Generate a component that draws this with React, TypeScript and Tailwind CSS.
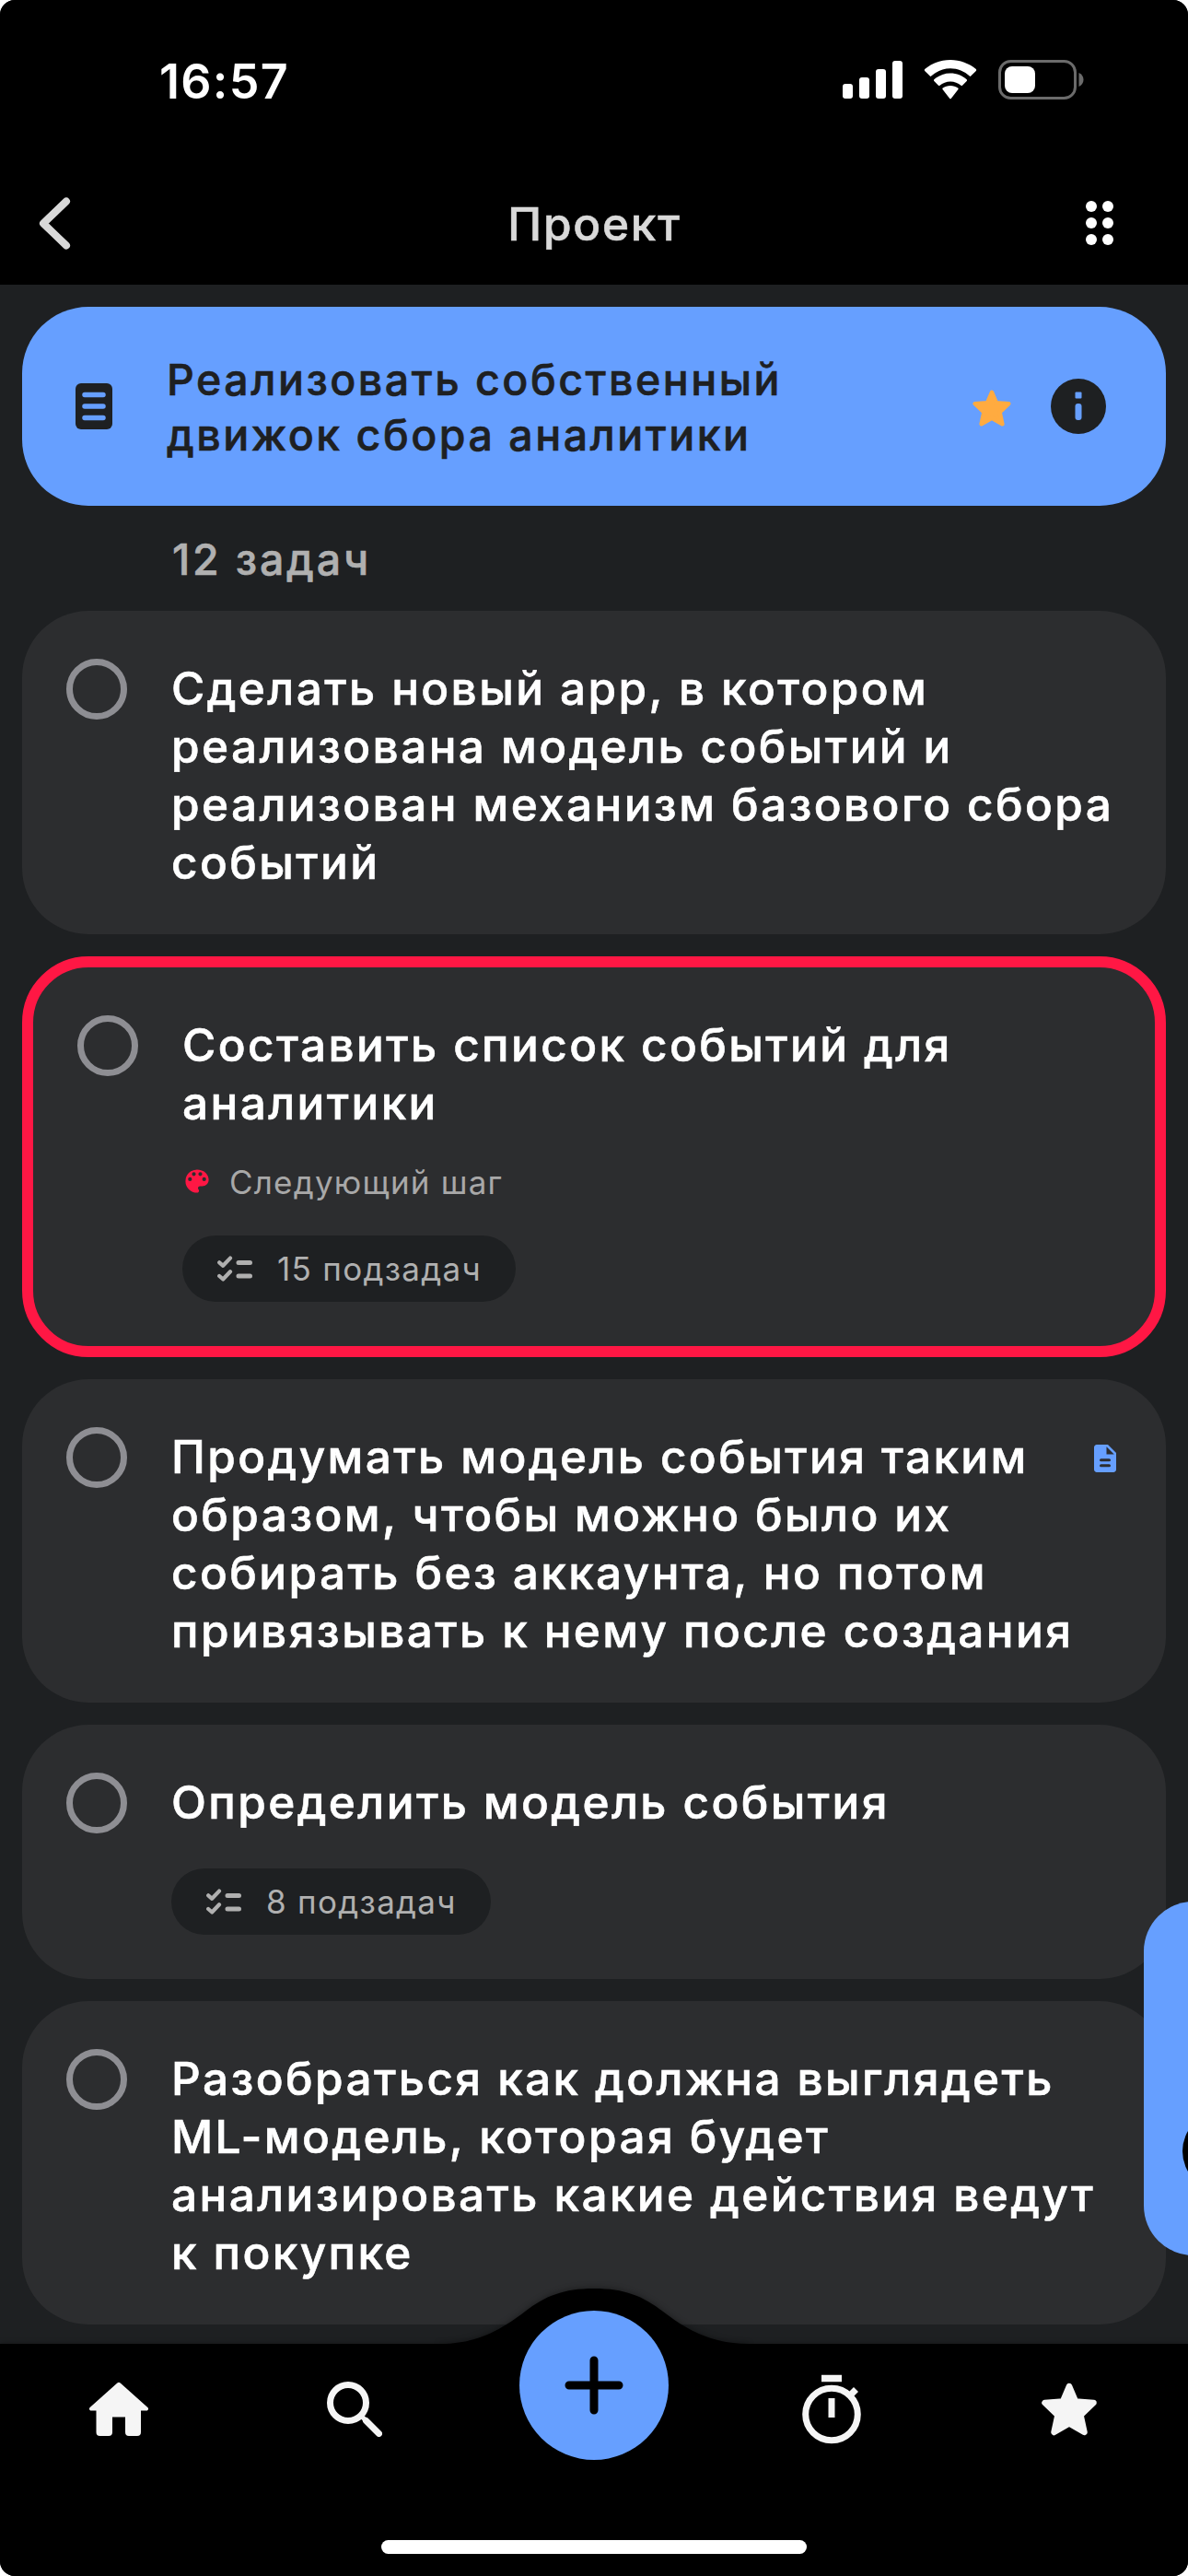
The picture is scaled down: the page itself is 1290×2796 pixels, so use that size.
import type { ReactNode } from "react";

type Task = {
  title: string[];
  highlighted?: boolean;
  label?: string;
  subtasks?: string;
  hasNote?: boolean;
};

const TASKS: Task[] = [
  { title: ["Сделать новый app, в котором", "реализована модель событий и", "реализован механизм базового сбора", "событий"] },
  { title: ["Составить список событий для", "аналитики"], highlighted: true, label: "Следующий шаг", subtasks: "15 подзадач" },
  { title: ["Продумать модель события таким", "образом, чтобы можно было их", "собирать без аккаунта, но потом", "привязывать к нему после создания"], hasNote: true },
  { title: ["Определить модель события"], subtasks: "8 подзадач" },
  { title: ["Разобраться как должна выглядеть", "ML-модель, которая будет", "анализировать какие действия ведут", "к покупке"] },
];

function StatusBar() {
  return (
    <div className="flex h-[174px] items-start justify-between pl-[173px] pr-[112px]">
      <div className="pt-[57px] text-[52px] leading-[63px] font-semibold tracking-[1.3px] text-white">16:57</div>
      <div className="flex items-center gap-[23px] pt-[65px]">
        <svg width="65" height="43" viewBox="0 0 65 43" fill="#fff">
          <rect x="0" y="26" width="11" height="16" rx="3" />
          <rect x="18" y="19" width="11" height="23" rx="3" />
          <rect x="36" y="10" width="11" height="32" rx="3" />
          <rect x="54" y="1" width="11" height="41" rx="3" />
        </svg>
        <svg width="58" height="43" viewBox="0 0 58 43" fill="#fff">
          <path d="M29 9.3c8 0 15.300 3.100 20.800 8.300.4.400 1 .4 1.400 0l5.600-5.700c.5-.5.5-1.300 0-1.800C49.400 3.800 39.500 0 29 0S8.600 3.800 1.200 10.100c-.5.5-.5 1.300 0 1.800l5.600 5.700c.4.400 1 .4 1.400 0C13.700 12.400 21 9.300 29 9.300z" />
          <path d="M29 23.500c4.400 0 8.400 1.600 11.500 4.300.4.400 1.100.4 1.500 0l4.700-4.800c.5-.5.5-1.300 0-1.800C42 17 35.800 14.400 29 14.400S16 17 11.300 21.200c-.5.500-.5 1.300 0 1.800l4.700 4.800c.4.400 1.100.4 1.500 0 3.100-2.700 7.100-4.300 11.500-4.300z" />
          <path d="M37.300 32.300c.5-.5.5-1.300-.1-1.700C35 28.900 32.100 27.900 29 27.900s-6 1-8.200 2.700c-.6.4-.6 1.200-.1 1.700l7.400 9.500c.5.700 1.300.7 1.800 0z" />
        </svg>
        <svg width="94" height="43" viewBox="0 0 94 43">
          <rect x="1.500" y="1.500" width="82" height="40" rx="12" fill="none" stroke="#6b6b6b" strokeWidth="3" />
          <rect x="7" y="7" width="33" height="29" rx="8" fill="#fff" />
          <path d="M87.500 14v15c3-1.200 5-4 5-7.500s-2-6.300-5-7.500z" fill="#6b6b6b" />
        </svg>
      </div>
    </div>
  );
}

function TopBar() {
  return (
    <div className="grid h-[135px] grid-cols-[1fr_auto_1fr] items-center pr-[81px] pl-[42px]">
      <svg width="46" height="60" viewBox="0 0 46 60" fill="none" stroke="#d9d9d9" strokeWidth="8" strokeLinecap="round" strokeLinejoin="round">
        <path d="M30 6.500 5 30.500 30 54.500" />
      </svg>
      <h1 className="ml-[40px] pt-[3px] text-[49.5px] leading-[60px] font-medium tracking-[1.8px] text-[#d9d9d9] [-webkit-text-stroke:0.6px_currentColor]">Проект</h1>
      <div className="grid grid-cols-[12px_12px] justify-end gap-[6px]">
        {[0, 1, 2, 3, 4, 5].map((i) => (
          <span key={i} className="h-3 w-3 rounded-full bg-white" />
        ))}
      </div>
    </div>
  );
}

const STAR = "M30 4 37 20.500 56.500 22 42.500 35.500 46.500 54 30 44.500 13.500 54 17.500 35.500 3.500 22 23 20.500z";

function StarIcon({ className }: { className: string }) {
  return (
    <svg viewBox="0 0 60 58" className={className} fill="currentColor" stroke="currentColor" strokeWidth="6.500" strokeLinejoin="round">
      <path d={STAR} />
    </svg>
  );
}

function ProjectCard() {
  return (
    <div className="flex h-[216px] items-center rounded-[72px] bg-[#669fff] pl-[58px] pr-[65px] text-[#1e2022]">
      <svg width="40" height="50" viewBox="0 0 40 50">
        <rect width="40" height="50" rx="6" fill="#1e2022" />
        <path d="M10 12.500h20M10 25h20M10 37.500h20" stroke="#669fff" strokeWidth="5.500" strokeLinecap="round" />
      </svg>
      <div className="ml-[59px] flex-1 pt-[1px] text-[46.5px] leading-[60px] font-medium tracking-[2.5px] whitespace-nowrap [-webkit-text-stroke:0.6px_currentColor]">
        Реализовать собственный
        <br />
        движок сбора аналитики
      </div>
      <StarIcon className="mt-[4px] h-[40px] w-[42px] text-[#ffab40]" />
      <svg width="60" height="60" viewBox="0 0 60 60" className="ml-[43px]">
        <circle cx="30" cy="30" r="30" fill="#1e2022" />
        <rect x="26.500" y="14.500" width="7" height="7" rx="1" fill="#669fff" />
        <rect x="26.500" y="27" width="7" height="18" rx="3" fill="#669fff" />
      </svg>
    </div>
  );
}

function SubtasksPill({ text }: { text: string }) {
  return (
    <div className="flex h-[72px] w-fit items-center rounded-full bg-[#1e2022] pr-[37px] pl-[38px] text-[35px] tracking-[1.3px] whitespace-nowrap text-[#b0b0b0]">
      <svg width="38" height="28" viewBox="0 0 38 28" fill="none" stroke="#b0b0b0" strokeLinecap="round" strokeLinejoin="round">
        <path d="M2.200 7.300 6.200 10.800 14 2.600M2.200 22 6.200 25.500 14 17.300" strokeWidth="4.200" />
        <path d="M23 7.500h12.500M23 22h12.500" strokeWidth="5" />
      </svg>
      <span className="ml-[27px]">{text}</span>
    </div>
  );
}

function TaskCard({ task }: { task: Task }) {
  return (
    <div
      className={`flex rounded-[72px] bg-[#2c2d2f] pt-[52px] pl-[48px] pr-[54px] ${task.subtasks ? "pb-[48px]" : "pb-[47px]"} ${
        task.highlighted ? "border-12 border-[#ff1744]" : ""
      }`}
    >
      <div className="h-[66px] w-[66px] shrink-0 rounded-full border-[7px] border-[#8e8e93]" />
      <div className="ml-[48px] flex-1">
        <div className="relative top-px text-[49.5px] leading-[63px] font-medium tracking-[2.4px] whitespace-nowrap text-white [-webkit-text-stroke:0.6px_currentColor]">
          {task.title.map((line) => (
            <div key={line}>{line}</div>
          ))}
        </div>
        {task.label && (
          <div className="mt-[33px] flex h-[42px] items-center pl-[2px]">
            <svg width="28" height="28" viewBox="2 2 20 20" fill="#ff1744">
              <path d="M12 3a9 9 0 0 0 0 18c.83 0 1.500-.67 1.500-1.500 0-.39-.15-.74-.39-1.010-.23-.26-.38-.61-.38-.99 0-.83.67-1.500 1.500-1.500H16c2.760 0 5-2.240 5-5 0-4.420-4.030-8-9-8zm-5.500 9a1.500 1.500 0 1 1 0-3 1.500 1.500 0 0 1 0 3zm3-4a1.500 1.500 0 1 1 0-3 1.500 1.500 0 0 1 0 3zm5 0a1.500 1.500 0 1 1 0-3 1.500 1.500 0 0 1 0 3zm3 4a1.500 1.500 0 1 1 0-3 1.500 1.500 0 0 1 0 3z" />
            </svg>
            <span className="ml-[21px] pt-[1px] text-[35px] leading-[42px] tracking-[1.2px] text-[#a8a8a8]">{task.label}</span>
          </div>
        )}
        {task.subtasks && (
          <div className={task.label ? "mt-[38px]" : "mt-[41px]"}>
            <SubtasksPill text={task.subtasks} />
          </div>
        )}
      </div>
      {task.hasNote && (
        <svg width="24" height="30" viewBox="4 2 16 20" className="mt-[19px] shrink-0" fill="#669fff">
          <path d="M14 2H6c-1.100 0-2 .9-2 2v16c0 1.100.89 2 1.990 2H18c1.100 0 2-.9 2-2V8l-6-6z" />
          <path d="M13 9V3.500L18.500 9z" fill="#2c2d2f" />
          <path d="M9 13.200h6M9 17.200h6" stroke="#2c2d2f" strokeWidth="2" strokeLinecap="round" />
        </svg>
      )}
    </div>
  );
}

function NavSlot({ children }: { children?: ReactNode }) {
  return <div className="flex h-[80px] w-[258px] items-center justify-center text-[#f5f5f5]">{children}</div>;
}

function BottomNav() {
  return (
    <nav className="absolute bottom-0 left-0 h-[252px] w-full bg-black shadow-[0_0_6px_rgba(0,0,0,0.35)]">
      {/* горб под кнопкой добавления */}
      <svg width="336" height="62" viewBox="0 0 336 62" className="absolute -top-[60px] left-[477px] overflow-visible drop-shadow-[0_-1px_3px_rgba(0,0,0,0.35)]">
        <path d="M0 60C42 60 68 44 93 25 115 8 135 0 168 0s53 8 75 25c25 19 51 35 93 35v2H0z" fill="#000" />
      </svg>
      <div className="absolute -top-[36px] left-[564px] flex h-[162px] w-[162px] items-center justify-center rounded-full bg-[#669fff]">
        <svg width="64" height="64" viewBox="0 0 64 64" stroke="#000" strokeWidth="9" strokeLinecap="round">
          <path d="M32 5v54M5 32h54" />
        </svg>
      </div>
      <div className="flex pt-[31px]">
        <NavSlot>
          <svg width="64" height="58" viewBox="0 0 64 58" fill="currentColor">
            <path d="M29.800 1a3 3 0 0 1 4.400 0L63.300 27c1.400 1.300.7 3.500-1.300 3.500h-6V54a4 4 0 0 1-4 4H43a4 4 0 0 1-4-4V37.500H25V54a4 4 0 0 1-4 4h-9.500a4 4 0 0 1-4-4V30.500H2C0 30.500-.7 28.300.7 27z" />
          </svg>
        </NavSlot>
        <NavSlot>
          <svg width="60" height="60" viewBox="0 0 60 60" className="mr-[4px]" fill="none" stroke="currentColor">
            <circle cx="23" cy="23" r="19.500" strokeWidth="7" />
            <path d="M42.500 42.500 56.500 56.500" strokeWidth="7" strokeLinecap="round" />
            <path d="M37 37l6 6" strokeWidth="5" />
          </svg>
        </NavSlot>
        <NavSlot />
        <NavSlot>
          <svg width="64" height="76" viewBox="0 0 64 76" fill="none" stroke="currentColor" strokeWidth="7">
            <circle cx="32" cy="43.500" r="28.300" />
            <path d="M21 4.500h22" strokeWidth="7.500" />
            <path d="M32 26v21" />
            <path d="M50 25l8.500-8.500" />
          </svg>
        </NavSlot>
        <NavSlot>
          <StarIcon className="h-[58px] w-[60px]" />
        </NavSlot>
      </div>
      <div className="mx-auto mt-[102px] h-[15px] w-[462px] rounded-full bg-white" />
    </nav>
  );
}

export default function App() {
  return (
    <div className="h-[2796px] w-[1290px] bg-white">
      <div className="relative h-full w-full overflow-hidden rounded-[16px] bg-[#1e2022] font-['Inter','Liberation_Sans',sans-serif]">
        <header className="h-[309px] bg-black">
          <StatusBar />
          <TopBar />
        </header>
        <main className="px-[24px] pt-[24px]">
          <ProjectCard />
          <div className="flex h-[114px] items-center pt-[1px] pl-[163px] text-[46.5px] leading-[60px] font-medium tracking-[2.8px] text-[#b0b0b0] [-webkit-text-stroke:0.6px_currentColor]">12 задач</div>
          <div className="flex flex-col gap-[24px]">
            {TASKS.map((task) => (
              <TaskCard key={task.title[0]} task={task} />
            ))}
          </div>
        </main>
        {/* выдвижная панель у правого края */}
        <div className="absolute top-[2064px] left-[1242px] h-[384px] w-[120px] overflow-hidden rounded-[54px] bg-[#669fff]">
          <div className="mt-[228px] ml-[42px] h-[86px] w-[86px] rounded-full bg-black" />
        </div>
        <BottomNav />
      </div>
    </div>
  );
}
